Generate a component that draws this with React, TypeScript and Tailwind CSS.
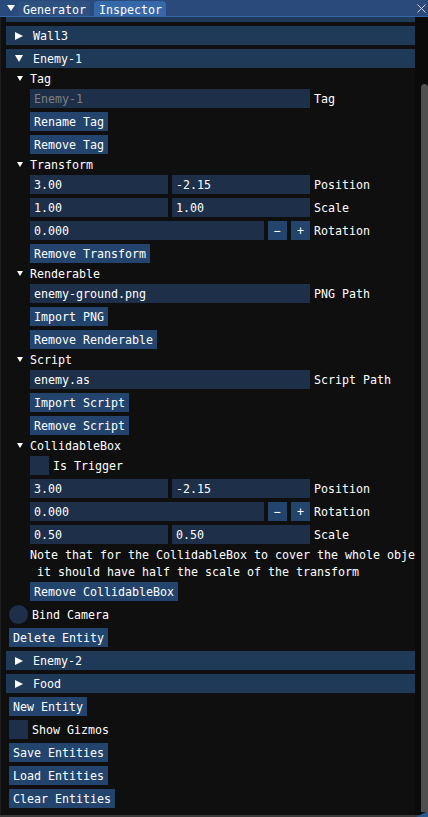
import React from "react";

const FONT = "font-['DejaVu_Sans_Mono',monospace] text-[11.63px] leading-[13px]";
const T = "translate-y-[1px]";

function TriRight() {
  return (
    <svg width="8" height="8" viewBox="0 0 8 8">
      <polygon points="0,0 8,4 0,8" fill="#ffffff" />
    </svg>
  );
}

function TriDown({ w = 8, h = 7 }: { w?: number; h?: number }) {
  return (
    <svg width={w} height={h} viewBox={`0 0 ${w} ${h}`}>
      <polygon points={`0,0 ${w},0 ${w / 2},${h}`} fill="#ffffff" />
    </svg>
  );
}

function Header({ label, open }: { label: string; open?: boolean }) {
  return (
    <div className="h-[19px] shrink-0 bg-[#1f3958] flex items-center">
      <div className="ml-[9px] w-[8px] flex justify-center">
        {open ? <TriDown w={8} h={7} /> : <TriRight />}
      </div>
      <span className={`ml-[10px] ${T}`}>{label}</span>
    </div>
  );
}

function TreeNode({ label }: { label: string }) {
  return (
    <div className="h-[13px] shrink-0 flex items-center ml-[11px]">
      <TriDown w={6} h={5} />
      <span className={`ml-[7px] ${T}`}>{label}</span>
    </div>
  );
}

function Button({ label, indent }: { label: string; indent?: boolean }) {
  return (
    <div
      className={`${indent ? "ml-[24px]" : "ml-[3px]"} self-start shrink-0 h-[19px] px-[4px] bg-[#23456d] flex items-center whitespace-nowrap`}
    >
      <span className={T}>{label}</span>
    </div>
  );
}

function Field({ value, w, hint }: { value: string; w: string; hint?: boolean }) {
  return (
    <div
      className={`${w} h-[19px] bg-[#1d2f49] px-[4px] flex items-center whitespace-nowrap overflow-hidden ${hint ? "text-[#808080]" : ""}`}
    >
      <span className={T}>{value}</span>
    </div>
  );
}

function SmallBtn({ label }: { label: string }) {
  return (
    <div className="w-[19px] h-[19px] bg-[#23456d] flex items-center justify-center">
      <span className={T}>{label}</span>
    </div>
  );
}

function Row({ children, label }: { children: React.ReactNode; label: string }) {
  return (
    <div className="ml-[24px] shrink-0 h-[19px] flex items-center gap-[4px]">
      {children}
      <span className={`whitespace-nowrap ${T}`}>{label}</span>
    </div>
  );
}

function Pair({ a, b, label }: { a: string; b: string; label: string }) {
  return (
    <Row label={label}>
      <Field value={a} w="w-[138px]" />
      <Field value={b} w="w-[138px]" />
    </Row>
  );
}

function Rotation({ v }: { v: string }) {
  return (
    <Row label="Rotation">
      <Field value={v} w="w-[234px]" />
      <SmallBtn label="−" />
      <SmallBtn label="+" />
    </Row>
  );
}

function Checkbox({ label, indent }: { label: string; indent?: boolean }) {
  return (
    <div className={`${indent ? "ml-[24px]" : "ml-[3px]"} shrink-0 h-[19px] flex items-center gap-[4px]`}>
      <div className="w-[19px] h-[19px] bg-[#1d2f49]" />
      <span className={T}>{label}</span>
    </div>
  );
}

export default function App() {
  return (
    <div className={`w-[428px] h-[817px] bg-[#0f0f0f] text-white overflow-hidden flex flex-col relative ${FONT}`}>
      {/* Title / tab bar */}
      <div className="h-[16px] shrink-0 bg-[#294a7a] flex items-end">
        <div className="ml-[7px] self-center">
          <TriDown w={8} h={6} />
        </div>
        <div className="ml-[3px] w-[72px] h-[15px] rounded-t-[4px] bg-[#2d5282] pl-[5px] pt-[3px]">Generator</div>
        <div className="ml-[4px] w-[72px] h-[15px] rounded-t-[4px] bg-[#3568a8] pl-[5px] pt-[3px]">Inspector</div>
        <div className="flex-1" />
        <div className="self-center mr-[2px]">
          <svg width="9" height="9" viewBox="0 0 9 9">
            <line x1="0.5" y1="0.5" x2="8.5" y2="8.5" stroke="#d0d0d0" strokeWidth="1" />
            <line x1="8.5" y1="0.5" x2="0.5" y2="8.5" stroke="#d0d0d0" strokeWidth="1" />
          </svg>
        </div>
      </div>
      <div className="h-[1px] shrink-0 bg-[#3568a8]" />

      <div className="flex flex-1 min-h-0">
        <div className="w-[1px] bg-[#1e1e1e]" />
        <div className="flex-1 min-w-0 overflow-hidden pl-[5px] flex flex-col gap-[4px]">
          <div className="h-[5px] shrink-0 bg-[#1f3958]" />
          <Header label="Wall3" />
          <Header label="Enemy-1" open />
          <TreeNode label="Tag" />
          <Row label="Tag">
            <Field value="Enemy-1" w="w-[280px]" hint />
          </Row>
          <Button label="Rename Tag" indent />
          <Button label="Remove Tag" indent />
          <TreeNode label="Transform" />
          <Pair a="3.00" b="-2.15" label="Position" />
          <Pair a="1.00" b="1.00" label="Scale" />
          <Rotation v="0.000" />
          <Button label="Remove Transform" indent />
          <TreeNode label="Renderable" />
          <Row label="PNG Path">
            <Field value="enemy-ground.png" w="w-[280px]" />
          </Row>
          <Button label="Import PNG" indent />
          <Button label="Remove Renderable" indent />
          <TreeNode label="Script" />
          <Row label="Script Path">
            <Field value="enemy.as" w="w-[280px]" />
          </Row>
          <Button label="Import Script" indent />
          <Button label="Remove Script" indent />
          <TreeNode label="CollidableBox" />
          <Checkbox label="Is Trigger" indent />
          <Pair a="3.00" b="-2.15" label="Position" />
          <Rotation v="0.000" />
          <Pair a="0.50" b="0.50" label="Scale" />
          <div className={`ml-[24px] h-[13px] shrink-0 whitespace-nowrap ${T}`}>
            Note that for the CollidableBox to cover the whole object
          </div>
          <div className={`ml-[24px] h-[13px] shrink-0 whitespace-pre ${T}`}>
            {" it should have half the scale of the transform"}
          </div>
          <Button label="Remove CollidableBox" indent />
          <div className="ml-[3px] shrink-0 h-[19px] flex items-center gap-[4px]">
            <div className="w-[19px] h-[19px] rounded-full bg-[#1d2f49]" />
            <span className={T}>Bind Camera</span>
          </div>
          <Button label="Delete Entity" />
          <Header label="Enemy-2" />
          <Header label="Food" />
          <Button label="New Entity" />
          <Checkbox label="Show Gizmos" />
          <Button label="Save Entities" />
          <Button label="Load Entities" />
          <Button label="Clear Entities" />
        </div>
        {/* Scrollbar */}
        <div className="w-[13px] shrink-0 bg-[#0a0a0a] flex flex-col">
          <div className="ml-[6px] mt-[67px] mb-[3px] flex-1 bg-[#4f4f4f] rounded-t-[6px]" />
        </div>
      </div>
      <div className="h-[2px] shrink-0 bg-[#3a3a3a]" />
      <svg className="absolute right-0 bottom-0" width="12" height="6" viewBox="0 0 12 6">
        <polygon points="12,0 12,6 0,6" fill="#2a5a8e" />
      </svg>
    </div>
  );
}
